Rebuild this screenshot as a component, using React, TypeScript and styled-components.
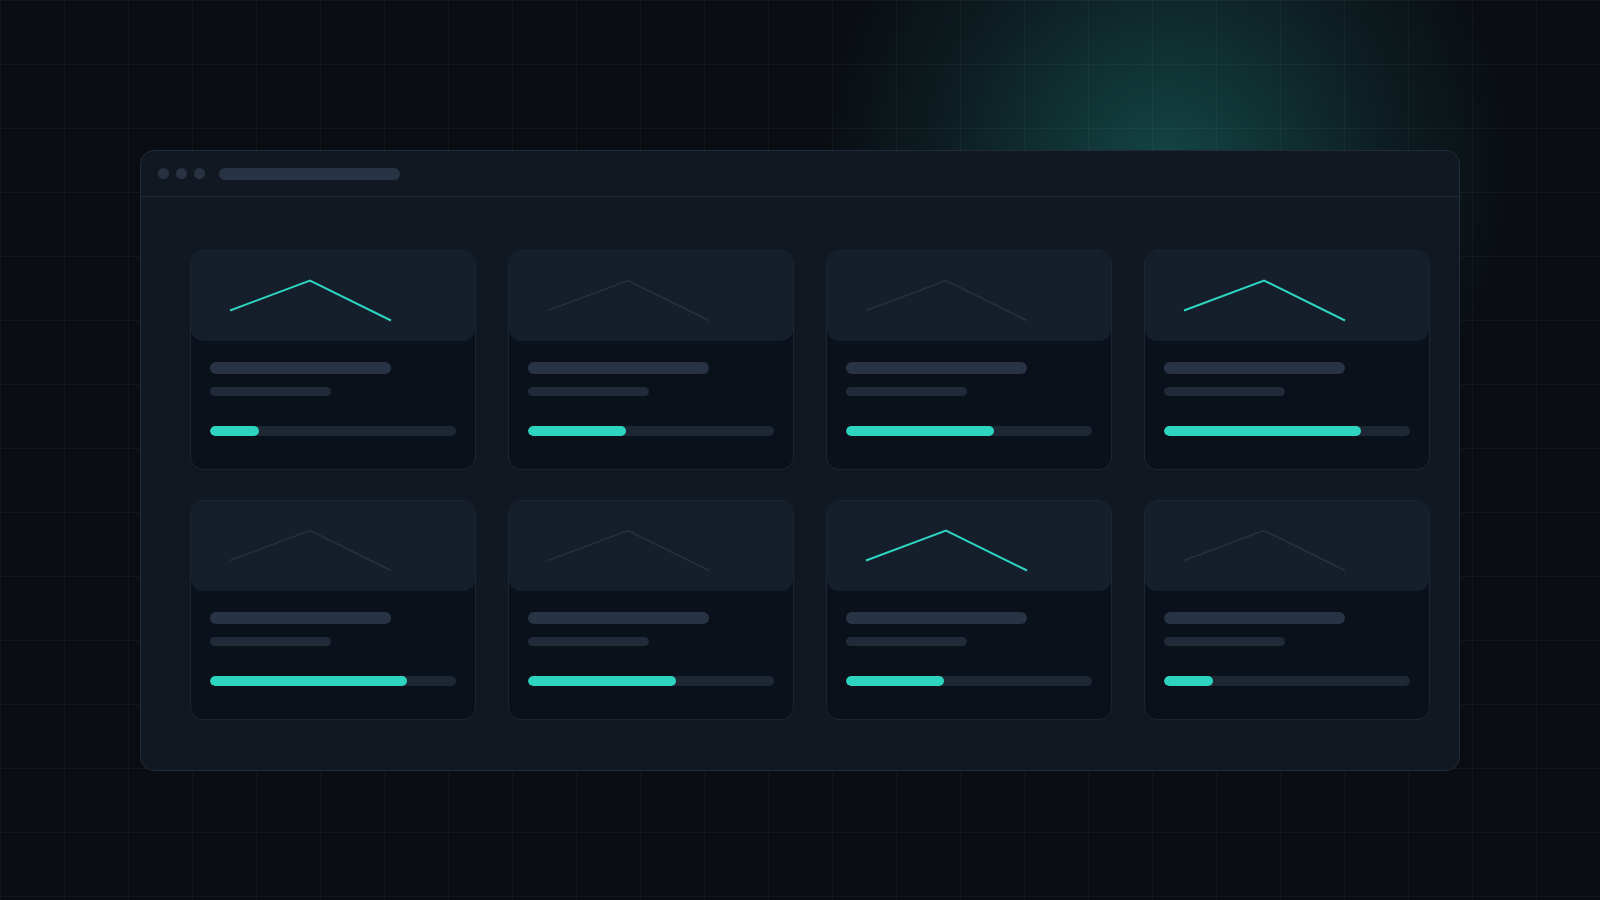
import React from "react";
import styled, { createGlobalStyle } from "styled-components";

const GlobalStyle = createGlobalStyle`
  html, body {
    margin: 0;
    padding: 0;
    background: #0a0e14;
    font-family: "Inter", "Liberation Sans", sans-serif;
  }
  * {
    box-sizing: border-box;
  }
`;

const Page = styled.div`
  width: 1600px;
  height: 900px;
  padding: 150px 140px 0 140px;
  overflow: hidden;
  background-color: #0a0e14;
  background-image: linear-gradient(
      to right,
      rgba(255, 255, 255, 0.035) 1px,
      transparent 1px
    ),
    linear-gradient(to bottom, rgba(255, 255, 255, 0.035) 1px, transparent 1px),
    radial-gradient(
      circle at 1166px 165px,
      rgba(45, 212, 191, 0.28) 0px,
      rgba(45, 212, 191, 0.17) 120px,
      rgba(45, 212, 191, 0.07) 230px,
      rgba(45, 212, 191, 0) 345px
    );
  background-size: 64px 64px, 64px 64px, 100% 100%;
  background-position: 0 0, 0 0, 0 0;
`;

const Window = styled.div`
  width: 1320px;
  height: 621px;
  background: #111822;
  border: 1px solid #212c39;
  border-radius: 14px;
  overflow: hidden;
`;

const TitleBar = styled.div`
  height: 46px;
  display: flex;
  align-items: center;
  padding-left: 17px;
  border-bottom: 1px solid #212c39;
`;

const Dots = styled.div`
  display: flex;
  gap: 7px;
`;

const Dot = styled.span`
  width: 11px;
  height: 11px;
  border-radius: 50%;
  background: #283241;
`;

const AddressBar = styled.div`
  width: 181px;
  height: 12px;
  margin-left: 14px;
  border-radius: 6px;
  background: #283445;
`;

const Body = styled.div`
  padding: 53px 0 0 49px;
`;

const Grid = styled.div`
  display: grid;
  grid-template-columns: repeat(4, 286px);
  grid-auto-rows: 220px;
  column-gap: 32px;
  row-gap: 30px;
`;

const Card = styled.div`
  display: flex;
  flex-direction: column;
  background: #0b111a;
  border: 1px solid #1c2532;
  border-radius: 13px;
  overflow: hidden;
`;

const ChartArea = styled.div`
  height: 90px;
  background: #151e2b;
  border-radius: 12px;
`;

const CardBody = styled.div`
  padding: 21px 19px 0 19px;
  display: flex;
  flex-direction: column;
`;

const TitleLine = styled.div`
  width: 181px;
  height: 12px;
  border-radius: 6px;
  background: #283445;
`;

const SubLine = styled.div`
  width: 121px;
  height: 9px;
  margin-top: 13px;
  border-radius: 4.5px;
  background: #202a38;
`;

const Track = styled.div`
  width: 246px;
  height: 10px;
  margin-top: 30px;
  border-radius: 5px;
  background: #1e2835;
  overflow: hidden;
`;

const Fill = styled.div`
  height: 100%;
  border-radius: 5px;
  background: #2dd4bf;
`;

type CardData = { progress: number; active: boolean };

const cards: CardData[] = [
  { progress: 20, active: true },
  { progress: 40, active: false },
  { progress: 60, active: false },
  { progress: 80, active: true },
  { progress: 80, active: false },
  { progress: 60, active: false },
  { progress: 40, active: true },
  { progress: 20, active: false },
];

const MiniChart: React.FC<{ active: boolean }> = ({ active }) => (
  <svg width="284" height="90" viewBox="0 0 284 90">
    <polyline
      points="39,59.5 119,29.5 200,69.5"
      fill="none"
      stroke={active ? "#2dd4bf" : "#263140"}
      strokeWidth={active ? 2 : 1.6}
    />
  </svg>
);

const App: React.FC = () => {
  return (
    <>
      <GlobalStyle />
      <Page>
        <Window>
          <TitleBar>
            <Dots>
              <Dot />
              <Dot />
              <Dot />
            </Dots>
            <AddressBar />
          </TitleBar>
          <Body>
            <Grid>
              {cards.map((card, index) => (
                <Card key={index}>
                  <ChartArea>
                    <MiniChart active={card.active} />
                  </ChartArea>
                  <CardBody>
                    <TitleLine />
                    <SubLine />
                    <Track>
                      <Fill style={{ width: `${card.progress}%` }} />
                    </Track>
                  </CardBody>
                </Card>
              ))}
            </Grid>
          </Body>
        </Window>
      </Page>
    </>
  );
};

export default App;
